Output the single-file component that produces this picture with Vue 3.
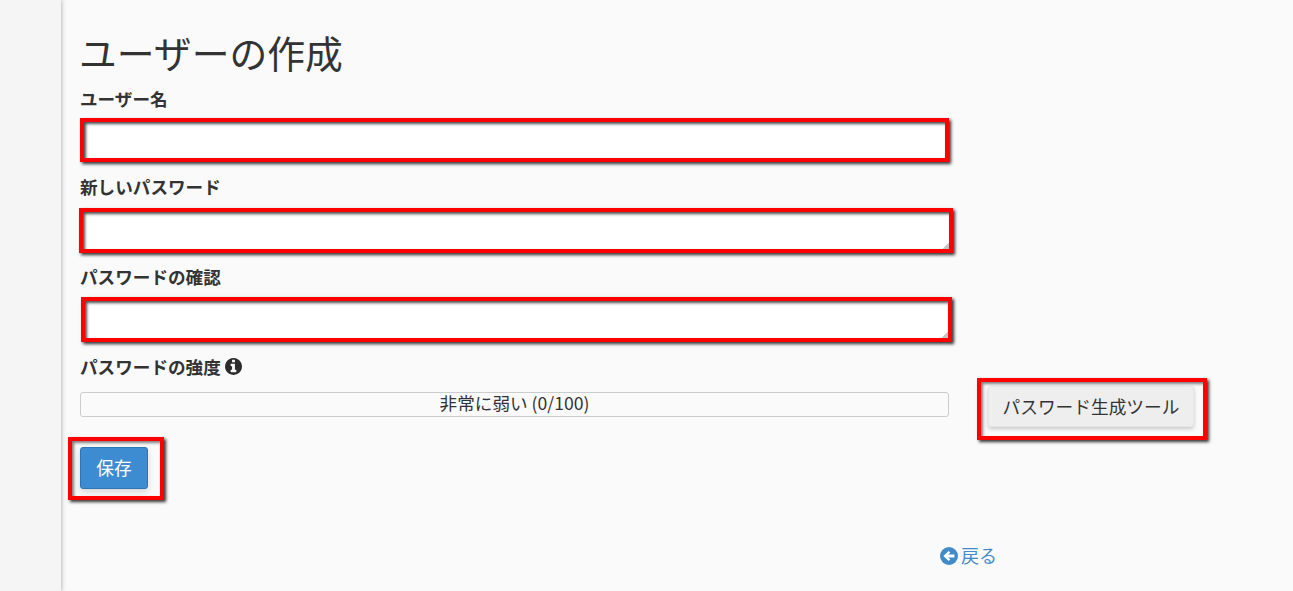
<template>
  <div class="page">
    <aside class="sidebar"></aside>

    <main class="content">
      <h1 class="title">ユーザーの作成</h1>

      <div v-for="field in fields" :key="field.id" class="form-group" :class="field.group">
        <label :for="field.id" class="form-label">{{ field.label }}</label>
        <textarea
          v-if="field.grip"
          :id="field.id"
          class="form-input"
          :class="field.box"
        ></textarea>
        <input v-else :id="field.id" type="text" class="form-input" :class="field.box" />
      </div>

      <div class="form-label strength-label">
        パスワードの強度
        <svg class="info-icon" viewBox="0 128 1536 1536" aria-hidden="true">
          <path d="M1024 1376v-160q0-14-9-23t-23-9h-96v-512q0-14-9-23t-23-9h-320q-14 0-23 9t-9 23v160q0 14 9 23t23 9h96v320h-96q-14 0-23 9t-9 23v160q0 14 9 23t23 9h448q14 0 23-9t9-23zm-128-896v-160q0-14-9-23t-23-9h-192q-14 0-23 9t-9 23v160q0 14 9 23t23 9h192q14 0 23-9t9-23zm640 416q0 209-103 385.5t-279.5 279.5-385.5 103-385.5-103-279.5-279.5-103-385.5 103-385.5 279.5-279.5 385.5-103 385.5 103 279.5 279.5 103 385.5z" />
        </svg>
      </div>

      <div class="strength-row">
        <div class="meter">非常に弱い (0/100)</div>
        <div class="mark mark-generate">
          <button type="button" class="btn btn-default">パスワード生成ツール</button>
        </div>
      </div>

      <div class="mark mark-save">
        <button type="button" class="btn btn-primary">保存</button>
      </div>

      <a class="back-link" href="#">
        <svg class="back-icon" viewBox="0 0 18 18" aria-hidden="true">
          <circle cx="9" cy="9" r="9" fill="#428bca" />
          <path d="M3.4 9 8.6 3.9l1.7 1.7-2.1 2h6.2v2.8H8.2l2.1 2-1.7 1.7z" fill="#fff" />
        </svg>
        戻る
      </a>
    </main>
  </div>
</template>

<script setup>
const fields = [
  { id: 'username', label: 'ユーザー名', group: 'group-name', box: 'box-name', grip: false },
  { id: 'password', label: '新しいパスワード', group: 'group-password', box: 'box-password', grip: true },
  { id: 'confirm', label: 'パスワードの確認', group: 'group-confirm', box: 'box-confirm', grip: true }
];
</script>

<style>
html,
body {
  background: #fafafa;
}
</style>

<style scoped>
.page {
  display: flex;
  height: 591px;
  overflow: hidden;
  background: #fafafa;
  color: #333;
  font-family: "Noto Sans CJK JP", "Noto Sans", sans-serif;
}

.sidebar {
  flex: 0 0 61px;
  background: #f5f5f5;
  box-shadow: 1px 0 4px rgba(0, 0, 0, 0.25);
}

.content {
  flex: 1;
  padding: 34px 0 0 19px;
  min-width: 0;
}

.title {
  margin: 0 0 0 -1px;
  height: 54px;
  font-size: 37.8px;
  font-weight: 400;
  line-height: 36px;
}

.group-name {
  height: 88px;
}

.group-password {
  height: 90px;
}

.group-confirm {
  height: 89px;
}

.form-label {
  display: block;
  height: 25px;
  font-size: 17.6px;
  font-weight: 700;
  line-height: 21px;
}

.form-input {
  display: block;
  box-sizing: border-box;
  margin: 0;
  padding: 0;
  background: #fff;
  border: 4px solid #f00;
  border-radius: 0;
  outline: none;
  box-shadow: 2px 2px 3px rgba(0, 0, 0, 0.8), inset 2px 2px 3px rgba(0, 0, 0, 0.7);
}

.box-name {
  width: 869px;
  height: 44px;
  margin-top: 5px;
}

.box-password {
  width: 874px;
  height: 45px;
  margin-top: 7px;
  margin-left: -1px;
}

.box-confirm {
  width: 871px;
  height: 45px;
  margin-top: 6px;
  margin-left: 1px;
}

textarea.form-input {
  resize: both;
}

textarea.form-input::-webkit-resizer {
  background: linear-gradient(135deg, transparent 78%, #c4c4c4 78%);
}

.strength-label {
  display: flex;
  align-items: center;
  gap: 4px;
  height: 23px;
  line-height: 21px;
}

.info-icon {
  width: 17px;
  height: 17px;
  fill: #2b2b2b;
}

.strength-row {
  display: flex;
  align-items: flex-start;
  height: 62px;
}

.meter {
  box-sizing: border-box;
  width: 869px;
  height: 25px;
  margin-top: 14px;
  border: 1px solid #ccc;
  border-radius: 3px;
  font-size: 17.6px;
  line-height: 20px;
  text-align: center;
}

.mark {
  box-sizing: border-box;
  border: 4px solid #f00;
  box-shadow: 2px 2px 3px rgba(0, 0, 0, 0.8), inset 2px 2px 3px rgba(0, 0, 0, 0.5);
}

.mark-generate {
  width: 230px;
  height: 62px;
  margin-left: 28px;
  padding: 4px 9px 9px 7px;
}

.mark-save {
  width: 96px;
  height: 63px;
  margin-top: -3px;
  margin-left: -12px;
  padding: 6px 12px 7px 8px;
}

.btn {
  display: block;
  width: 100%;
  height: 100%;
  padding: 0;
  border-radius: 3px;
  font-family: inherit;
  font-size: 17.7px;
  line-height: 1;
  cursor: pointer;
}

.btn-default {
  background: #eee;
  border: 1px solid #e6e6e6;
  color: #333;
  box-shadow: 0 2px 4px rgba(0, 0, 0, 0.2);
}

.btn-primary {
  background: #3d8bd0;
  border: 1px solid #2e75b5;
  color: #fff;
  box-shadow: 0 3px 6px rgba(0, 0, 0, 0.15);
}

.back-link {
  display: flex;
  align-items: center;
  gap: 3px;
  width: max-content;
  margin-top: 43px;
  margin-left: 860px;
  color: #428bca;
  font-size: 18px;
  line-height: 25px;
  text-decoration: none;
}

.back-icon {
  width: 18px;
  height: 18px;
}
</style>
